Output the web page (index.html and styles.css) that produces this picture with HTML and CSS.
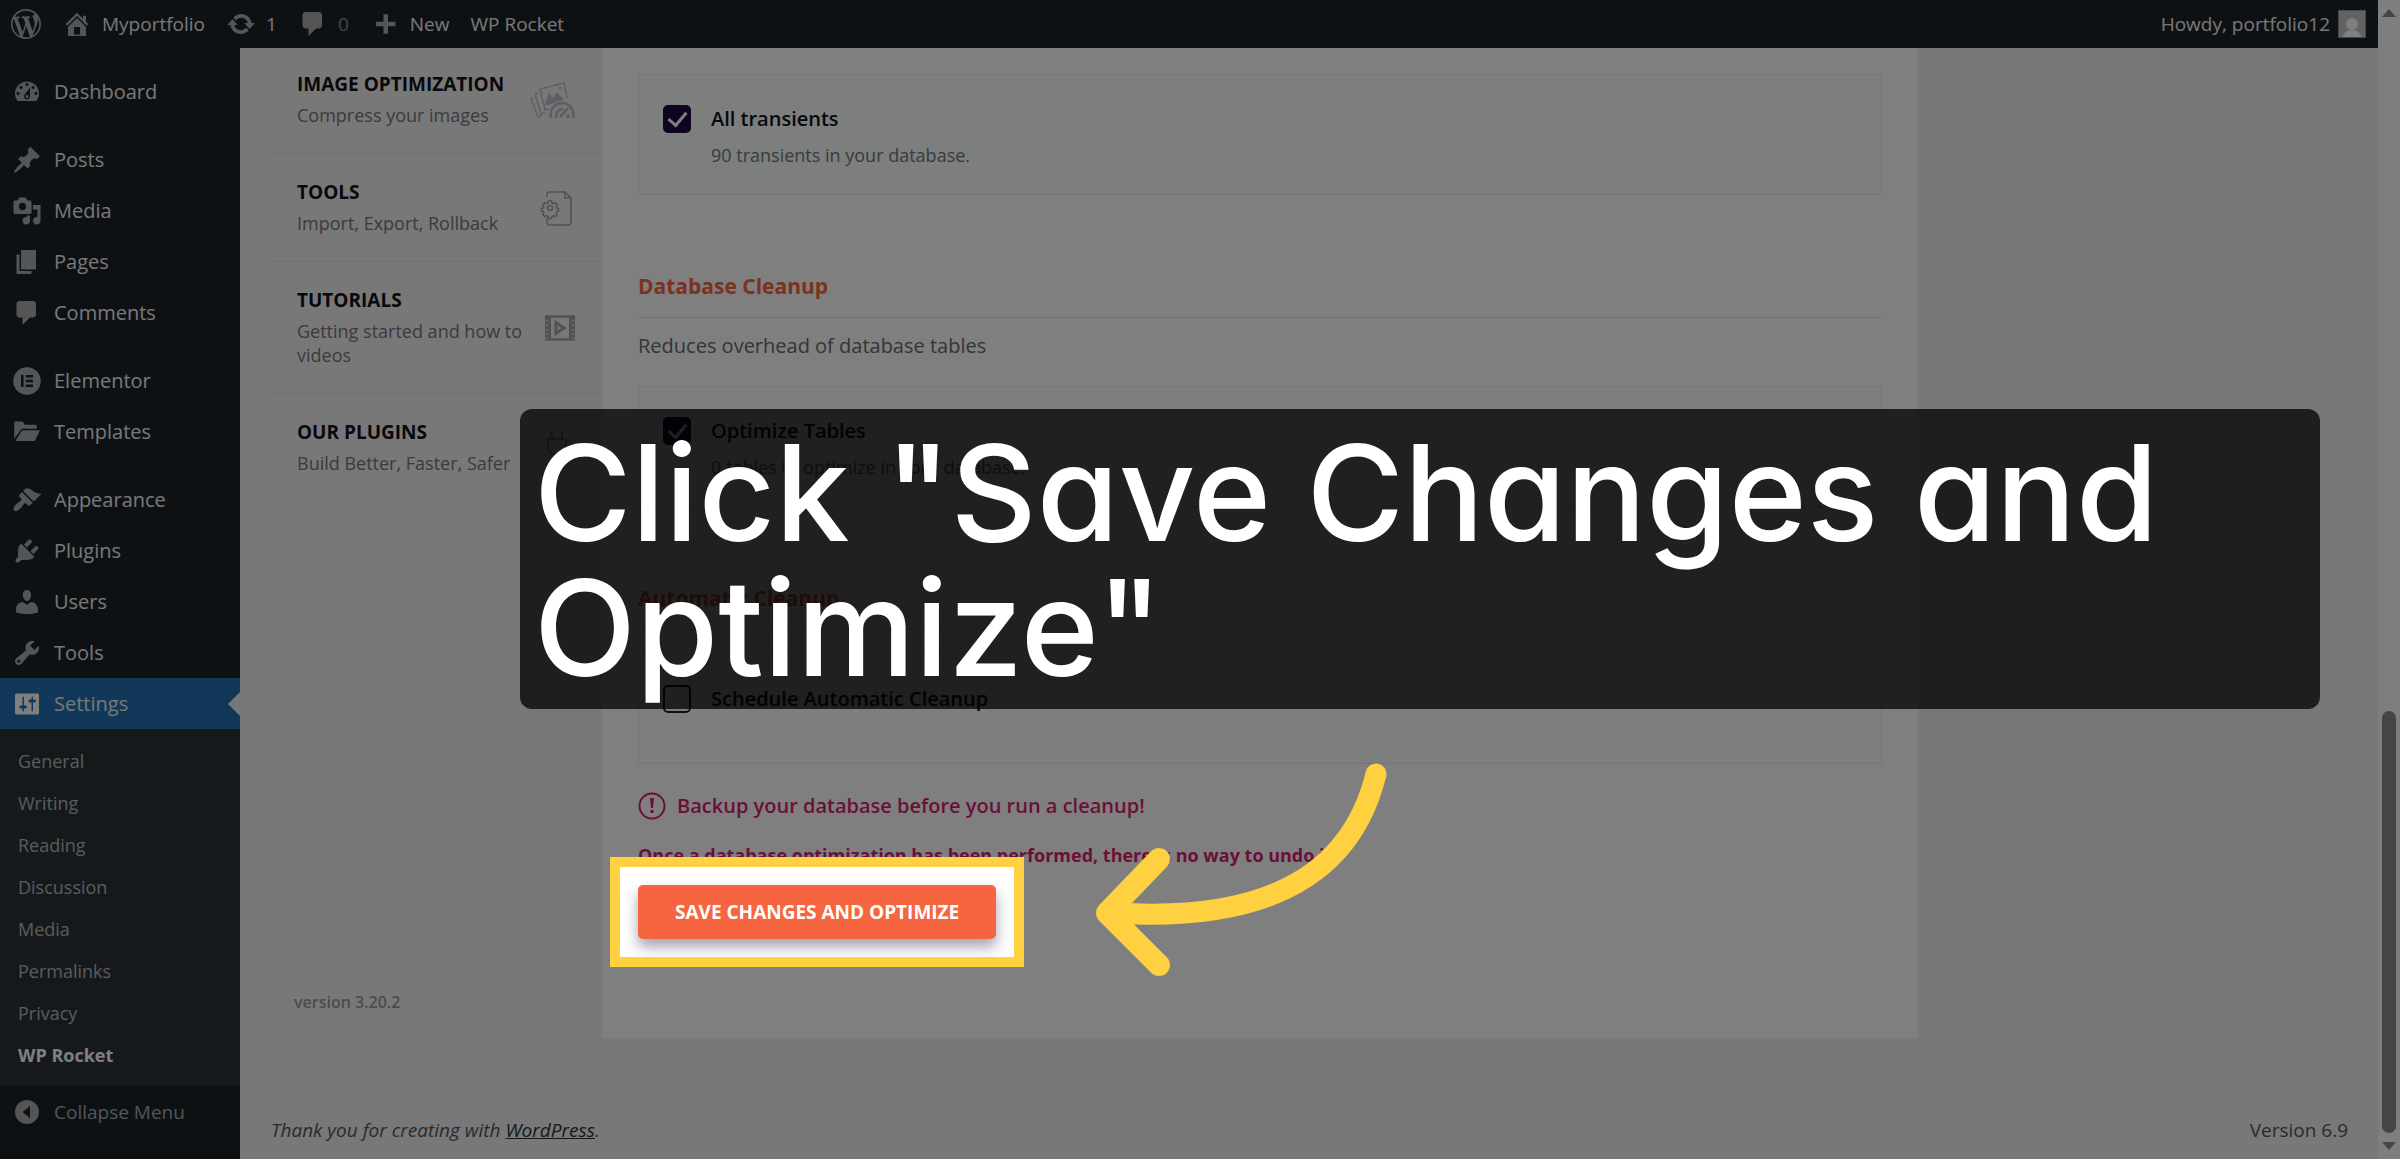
FILE: index.html
```html
<!DOCTYPE html>
<html lang="en">
<head>
<meta charset="utf-8">
<title>WP Rocket settings</title>
<link rel="stylesheet" href="styles.css">
</head>
<body>
<div class="screen">
  <header class="adminbar">
    <a class="bar-item" href="#" aria-label="About WordPress"><svg class="icon icon-wp" viewBox="0 0 20 20"><path d="M20 10c0-5.51-4.49-10-10-10C4.48 0 0 4.49 0 10c0 5.52 4.48 10 10 10 5.51 0 10-4.48 10-10zM7.78 15.37L4.37 6.22c.55-.02 1.17-.08 1.17-.08.5-.06.44-1.13-.06-1.11 0 0-1.45.11-2.37.11-.18 0-.37 0-.58-.01C4.12 2.69 6.87 1.11 10 1.11c2.33 0 4.45.87 6.05 2.34-.68-.11-1.65.39-1.65 1.58 0 .74.45 1.36.9 2.1.35.61.55 1.36.55 2.46 0 1.49-1.4 5-1.4 5l-3.03-8.37c.54-.02.82-.17.82-.17.5-.05.44-1.25-.06-1.22 0 0-1.44.12-2.38.12-.87 0-2.33-.12-2.33-.12-.5-.03-.56 1.2-.06 1.22l.92.08 1.26 3.41zM17.41 10c.24-.64.74-1.87.43-4.25.7 1.29 1.05 2.71 1.05 4.25 0 3.29-1.73 6.24-4.4 7.78.97-2.59 1.94-5.2 2.92-7.78zM6.1 18.09C3.12 16.65 1.11 13.53 1.11 10c0-1.3.23-2.48.72-3.59C3.25 10.3 4.67 14.2 6.1 18.09zm4.03-6.63l2.58 6.98c-.86.29-1.76.45-2.71.45-.79 0-1.57-.11-2.29-.33.81-2.38 1.62-4.74 2.42-7.1z"/></svg></a>
    <a class="bar-item" href="#"><svg class="icon" viewBox="0 0 20 20"><path d="M16 8.5l1.53 1.53-1.06 1.06L10 4.6l-6.47 6.49-1.06-1.06L10 2.5l4 4v-2h2v4zm-6-2.46l6 5.99V18H4v-5.97zM12 17v-5H8v5h4z"/></svg>Myportfolio</a>
    <a class="bar-item" href="#"><svg class="icon" viewBox="0 0 20 20"><path d="M10.2 3.28c3.53 0 6.43 2.61 6.92 6h2.08l-3.5 4-3.5-4h2.32c-.45-1.97-2.21-3.45-4.32-3.45-1.45 0-2.73.71-3.54 1.78L4.95 5.66C6.23 4.2 8.11 3.28 10.2 3.28zm-.4 13.44c-3.52 0-6.43-2.61-6.92-6H.8l3.5-4c1.17 1.33 2.33 2.67 3.5 4H5.48c.45 1.97 2.21 3.45 4.32 3.45 1.45 0 2.73-.71 3.54-1.78l1.71 1.95c-1.28 1.46-3.15 2.38-5.25 2.38z"/></svg>1</a>
    <a class="bar-item bar-muted" href="#"><svg class="icon" viewBox="0 0 20 20"><path d="M5 2h9c1.1 0 2 .9 2 2v7c0 1.1-.9 2-2 2h-2l-5 5v-5H5c-1.1 0-2-.9-2-2V4c0-1.1.9-2 2-2z"/></svg>0</a>
    <a class="bar-item" href="#"><svg class="icon" viewBox="0 0 20 20"><path d="M17 8.5v3h-5v5H9v-5H4v-3h5v-5h3v5h5z"/></svg>New</a>
    <a class="bar-item" href="#">WP Rocket</a>
    <a class="bar-item bar-account" href="#">Howdy, portfolio12<svg class="avatar" viewBox="0 0 28 28"><rect x=".5" y=".5" width="27" height="27" fill="#c4c4c4" stroke="#8c8f94"/><circle cx="14" cy="14" r="6" fill="#fff"/><path d="M4.500 27c2-5.500 5.500-7 9.500-7s7.500 1.500 9.500 7z" fill="#fff"/></svg></a>
  </header>

  <nav class="sidebar" aria-label="Main menu">
    <ul class="menu">
      <li><a href="#"><svg class="icon" viewBox="0 0 20 20"><path d="M3.76 16h12.48c1.1-1.37 1.76-3.11 1.76-5 0-4.42-3.58-8-8-8s-8 3.58-8 8c0 1.89.66 3.63 1.76 5zM10 4c.55 0 1 .45 1 1s-.45 1-1 1-1-.45-1-1 .45-1 1-1zM6 6c.55 0 1 .45 1 1s-.45 1-1 1-1-.45-1-1 .45-1 1-1zm8 0c.55 0 1 .45 1 1s-.45 1-1 1-1-.45-1-1 .45-1 1-1zm-5.370 5.550L12 7v6c0 1.100-.9 2-2 2s-2-.9-2-2c0-.57.24-1.080.63-1.450zM4 10c.55 0 1 .45 1 1s-.45 1-1 1-1-.45-1-1 .45-1 1-1zm12 0c.55 0 1 .45 1 1s-.45 1-1 1-1-.45-1-1 .45-1 1-1zm-5 3c0-.55-.45-1-1-1s-1 .45-1 1 .45 1 1 1 1-.45 1-1z"/></svg>Dashboard</a></li>
      <li class="group"><a href="#"><svg class="icon" viewBox="0 0 20 20"><path d="M10.440 3.020l1.820-1.820 6.360 6.350-1.830 1.820c-1.050-.68-2.480-.57-3.410.36l-.75.75c-.92.93-1.040 2.350-.35 3.410l-1.830 1.820-2.410-2.410-2.800 2.790c-.42.42-3.380 2.710-3.800 2.290s1.860-3.390 2.280-3.810l2.790-2.790L4.100 9.360l1.830-1.820c1.050.69 2.480.57 3.400-.36l.75-.75c.93-.92 1.050-2.350.36-3.410z"/></svg>Posts</a></li>
      <li><a href="#"><svg class="icon" viewBox="0 0 20 20"><path d="M13 11V4c0-.55-.45-1-1-1h-1.670L9 1H5L3.670 3H2c-.55 0-1 .45-1 1v7c0 .55.45 1 1 1h10c.55 0 1-.45 1-1zM7 4.500c1.380 0 2.500 1.120 2.500 2.500S8.380 9.500 7 9.500 4.500 8.380 4.500 7 5.620 4.500 7 4.500zM14 6h5v10.500c0 1.380-1.120 2.500-2.500 2.500S14 17.880 14 16.500s1.120-2.500 2.500-2.500c.17 0 .34.02.5.05V9h-3V6zm-4 8.050V13h2v3.500c0 1.380-1.120 2.500-2.500 2.500S7 17.880 7 16.500 8.120 14 9.500 14c.17 0 .34.02.5.05z"/></svg>Media</a></li>
      <li><a href="#"><svg class="icon" viewBox="0 0 20 20"><path d="M6 15V2h10v13H6zm-1 1h8v2H3V5h2v11z"/></svg>Pages</a></li>
      <li><a href="#"><svg class="icon" viewBox="0 0 20 20"><path d="M5 2h9c1.100 0 2 .9 2 2v7c0 1.100-.9 2-2 2h-2l-5 5v-5H5c-1.100 0-2-.9-2-2V4c0-1.100.9-2 2-2z"/></svg>Comments</a></li>
      <li class="group"><a href="#"><svg class="icon" viewBox="0 0 20 20"><path fill-rule="evenodd" d="M10 .8a9.200 9.200 0 1 0 0 18.400A9.200 9.200 0 0 0 10 .8zM6 6h1.700v8H6zM9.200 6H14v1.600H9.200zM9.200 9.200H14v1.600H9.200zM9.200 12.400H14V14H9.200z"/></svg>Elementor</a></li>
      <li><a href="#"><svg class="icon" viewBox="0 0 20 20"><path d="M2.500 3H7l1.600 2.200h6.900c.6 0 1 .4 1 1v1.600H7.300c-.7 0-1.200.3-1.500.8L1.500 14.700V4c0-.6.400-1 1-1zM7.400 8.800h11.200l-3 6.600c-.2.400-.5.600-1 .6H2.300l4.100-6.600c.2-.4.500-.6 1-.6z"/></svg>Templates</a></li>
      <li class="group"><a href="#"><svg class="icon" viewBox="0 0 20 20"><path d="M14.480 11.060L7.410 3.990l1.500-1.500c.5-.56 2.300-.47 3.510.32 1.210.8 1.430 1.280 2.910 2.100 1.180.64 2.450 1.260 4.450.85zm-.71.71L6.700 4.700 4.930 6.470c-.39.39-.39 1.020 0 1.410l1.060 1.060c.39.39.39 1.030 0 1.420-.6.6-1.430 1.110-2.210 1.690-.35.26-.7.53-1.010.84C1.430 14.230.4 16.080 1.400 17.070c.99 1 2.840-.03 4.180-1.360.31-.31.58-.66.85-1.020.57-.78 1.080-1.610 1.690-2.210.39-.39 1.020-.39 1.410 0l1.060 1.060c.39.39 1.020.39 1.410 0z"/></svg>Appearance</a></li>
      <li><a href="#"><svg class="icon" viewBox="0 0 20 20"><path d="M13.110 4.360L9.870 7.600 8 5.730l3.240-3.240c.35-.34 1.050-.2 1.560.32.52.51.66 1.210.31 1.550zm-8 1.770l.91-1.120 9.010 9.010-1.190.84c-.71.71-2.630 1.160-3.820 1.160H6.140L4.900 17.260c-.59.59-1.540.59-2.120 0-.59-.58-.59-1.530 0-2.120l1.240-1.240v-3.880c0-1.130.4-3.190 1.090-3.890zm7.260 3.970l3.240-3.240c.34-.35 1.040-.21 1.550.31.52.51.66 1.210.31 1.550l-3.240 3.250z"/></svg>Plugins</a></li>
      <li><a href="#"><svg class="icon" viewBox="0 0 20 20"><path d="M10 9.250c-2.270 0-2.730-3.440-2.730-3.440C7 4.020 7.820 2 9.970 2c2.160 0 2.980 2.020 2.710 3.810 0 0-.41 3.440-2.680 3.440zm0 2.570L12.720 10c2.390 0 4.520 2.330 4.520 4.530v2.490s-3.650 1.130-7.240 1.130c-3.650 0-7.240-1.130-7.240-1.130v-2.490c0-2.250 1.940-4.480 4.470-4.480z"/></svg>Users</a></li>
      <li><a href="#"><svg class="icon" viewBox="0 0 20 20"><path d="M16.680 9.770c-1.340 1.340-3.300 1.670-4.950.99l-5.410 6.520c-.99.99-2.590.99-3.580 0s-.99-2.590 0-3.570l6.520-5.420c-.68-1.650-.35-3.610.99-4.950 1.280-1.280 3.120-1.620 4.720-1.060l-2.890 2.890 2.820 2.820 2.860-2.870c.53 1.580.18 3.390-1.080 4.650zM3.810 16.210c.4.39 1.040.39 1.430 0 .4-.4.4-1.040 0-1.430-.39-.4-1.030-.4-1.430 0-.39.39-.39 1.030 0 1.430z"/></svg>Tools</a></li>
      <li class="current"><a href="#"><svg class="icon" viewBox="0 0 20 20"><path d="M18 16V4c0-.55-.45-1-1-1H3c-.55 0-1 .45-1 1v12c0 .55.45 1 1 1h14c.55 0 1-.45 1-1zM8 11h1c.55 0 1 .45 1 1s-.45 1-1 1H8v1.500c0 .28-.22.5-.5.5s-.5-.22-.5-.5V13H6c-.55 0-1-.45-1-1s.45-1 1-1h1V5.500c0-.28.22-.5.5-.5s.5.22.5.5V11zm5-2h-1c-.55 0-1-.45-1-1s.45-1 1-1h1V5.500c0-.28.22-.5.5-.5s.5.22.5.5V7h1c.55 0 1 .45 1 1s-.45 1-1 1h-1v5.500c0 .28-.22.5-.5.5s-.5-.22-.5-.5V9z"/></svg>Settings</a>
        <ul class="submenu">
          <li><a href="#">General</a></li>
          <li><a href="#">Writing</a></li>
          <li><a href="#">Reading</a></li>
          <li><a href="#">Discussion</a></li>
          <li><a href="#">Media</a></li>
          <li><a href="#">Permalinks</a></li>
          <li><a href="#">Privacy</a></li>
          <li><a class="active" href="#">WP Rocket</a></li>
        </ul>
      </li>
    </ul>
    <button class="collapse" type="button"><svg class="icon" viewBox="0 0 20 20"><path fill-rule="evenodd" d="M10 2a8 8 0 1 0 0 16 8 8 0 0 0 0-16zm2 4v8l-5-4z"/></svg>Collapse Menu</button>
  </nav>

  <main class="main">
    <div class="plugin">
      <nav class="tabs" aria-label="WP Rocket sections">
        <a class="tab" href="#"><span class="tab-text"><strong>IMAGE OPTIMIZATION</strong><span>Compress your images</span></span>
          <svg class="tab-icon tab-icon-pale" viewBox="0 0 46 40" fill="none" stroke="currentColor" stroke-width="1.500"><path d="M19 29l-4 1-5-21 24-6 3 15"/><path d="M8 13l-3 1 6 20 4-1M3 18l-2 1 7 18 4-2"/><path d="M15 23l4-10 4 5 4-6 7 8-6 1-6 3-8 2z" fill="currentColor" stroke="none"/><circle cx="30" cy="8" r="1.500" fill="currentColor" stroke="none"/><path stroke-width="3" d="M21 38c-2-9 4-15 11-15s13 6 11 15"/><path stroke-width="3" d="M27 38c-2-5 1-9 6-9M38 34v4M30 37l8-9"/></svg></a>
        <a class="tab" href="#"><span class="tab-text"><strong>TOOLS</strong><span>Import, Export, Rollback</span></span>
          <svg class="tab-icon" viewBox="0 0 46 40" fill="none" stroke="currentColor" stroke-width="1.500"><path d="M17 9V6q0-2 2-2h16l6 6v24q0 3-3 3H20q-3 0-3-3v-4M35 4v6h6"/><circle cx="20" cy="20" r="2.500"/><path d="M18.500 13h3l.5 2 1.500.8 1.800-1 2 2-1 1.700.4 1.500 2 .5v2.500l-2 .5-.5 1.500 1 1.700-2 2-1.700-1-1.500.8-.5 2h-3l-.5-2-1.500-.8-1.700 1-2-2 1-1.700-.5-1.500-2-.5v-2.500l2-.5.5-1.500-1-1.700 2-2 1.700 1 1.500-.8z"/></svg></a>
        <a class="tab" href="#"><span class="tab-text"><strong>TUTORIALS</strong><span>Getting started and how to videos</span></span>
          <svg class="tab-icon" viewBox="0 0 46 40" fill="none" stroke="currentColor"><path d="M15 8.500h30M15 31.500h30" stroke-width="2.500"/><path d="M18 8v24M42 8v24" stroke-width="6"/><path d="M17 12v19M43 12v19" stroke="#e4e4e6" stroke-width="2" stroke-dasharray="1.500 3"/><path d="M26 14.500l8 5.500-8 5.500z" stroke-width="3"/></svg></a>
        <a class="tab" href="#"><span class="tab-text"><strong>OUR PLUGINS</strong><span>Build Better, Faster, Safer</span></span>
          <svg class="tab-icon" viewBox="0 0 46 40" fill="none" stroke="currentColor" stroke-width="2"><path d="M18 11h18v7c0 6-4 9-9 9s-9-3-9-9zM22 11V2M32 11V2M27 27v10"/></svg></a>
        <p class="version">version 3.20.2</p>
      </nav>

      <form class="content">
        <section>
          <div class="option">
            <input type="checkbox" id="transients" checked>
            <label for="transients">All transients</label>
            <p>90 transients in your database.</p>
          </div>
        </section>
        <section>
          <h2>Database Cleanup</h2>
          <p class="lead">Reduces overhead of database tables</p>
          <div class="option">
            <input type="checkbox" id="tables" checked>
            <label for="tables">Optimize Tables</label>
            <p>0 tables to optimize in your database.</p>
          </div>
        </section>
        <section>
          <h2>Automatic Cleanup</h2>
          <div class="option option-short">
            <input type="checkbox" id="schedule">
            <label for="schedule">Schedule Automatic Cleanup</label>
          </div>
        </section>
        <p class="warning"><svg class="alert" viewBox="0 0 28 28"><circle cx="14" cy="14" r="12.500" fill="none" stroke="currentColor" stroke-width="2"/><path d="M12 6h4l-1 10h-2zM12.500 18h3v3h-3z" fill="currentColor"/></svg>Backup your database before you run a cleanup!</p>
        <p class="warning warning-note">Once a database optimization has been performed, there is no way to undo it.</p>
        <div class="save">
          <button class="save-button" type="submit">SAVE CHANGES AND OPTIMIZE</button>
          <span class="spotlight"></span>
        </div>
      </form>
    </div>

    <footer class="footer">
      <em>Thank you for creating with <a href="#">WordPress</a>.</em>
      <span>Version 6.9</span>
    </footer>
  </main>

  <div class="scrollbar" aria-hidden="true">
    <svg class="scroll-arrow" viewBox="0 0 14 8"><path d="M7 0l7 8H0z"/></svg>
    <span class="thumb"></span>
    <svg class="scroll-arrow" viewBox="0 0 14 8"><path d="M0 0h14L7 8z"/></svg>
  </div>
</div>

<p class="callout">Click "Save Changes and Optimize"</p>
<svg class="arrow" viewBox="0 0 300 224" fill="none" stroke="#ffd140" stroke-linecap="round" stroke-linejoin="round"><path stroke-width="21" d="M281 21C255 127 165 169 20 160"/><path stroke-width="22" d="M64 106L12 160l52 52"/></svg>
</body>
</html>
```

FILE: styles.css
```css
* {
  box-sizing: border-box;
}

body {
  position: relative;
  min-height: 100vh;
  margin: 0;
  overflow: hidden;
  background: #f0f0f1;
  color: #3c434a;
  font: 19px/24px "Open Sans", "Noto Sans", sans-serif;
}

a {
  color: inherit;
  text-decoration: none;
}

p,
h2,
ul {
  margin: 0;
  padding: 0;
}

ul {
  list-style: none;
}

button {
  border: 0;
  font-family: inherit;
}

.screen {
  display: grid;
  grid-template-columns: 240px 1fr 22px;
  grid-template-rows: 48px 1fr;
  min-height: 100vh;
}

.icon {
  flex: none;
  width: 30px;
  height: 30px;
  fill: #a7aaad;
}

/* Top bar */
.adminbar {
  grid-column: 1 / 3;
  display: flex;
  align-items: center;
  gap: 21px;
  padding: 0 12px 0 11px;
  background: #1d2327;
  color: #f0f0f1;
}

.bar-item {
  display: flex;
  align-items: center;
  gap: 10px;
}

.bar-muted {
  color: #8a8d90;
}

.bar-account {
  gap: 8px;
  margin-left: auto;
}

.avatar {
  width: 28px;
  height: 28px;
}

/* Left menu */
.sidebar {
  padding-top: 18px;
  background: #1d2327;
  color: #f0f0f1;
  font-size: 20px;
}

.menu > li > a,
.collapse {
  display: flex;
  align-items: center;
  gap: 12px;
  height: 51px;
  padding-left: 12px;
}

.menu > .group {
  margin-top: 17px;
}

.menu > .current > a {
  position: relative;
  background: #2271b1;
}

.current > a .icon {
  fill: #fff;
}

.current > a::after {
  content: "";
  position: absolute;
  top: 50%;
  right: 0;
  margin-top: -12px;
  border: 12px solid transparent;
  border-left: 0;
  border-right-color: #f0f0f1;
}

.submenu {
  padding: 11px 18px 10px;
  background: #2c3338;
  color: #b4b7ba;
  font-size: 18px;
  line-height: 42px;
}

.submenu .active {
  color: #fff;
  font-weight: 700;
}

.collapse {
  width: 100%;
  background: none;
  color: #a7aaad;
  font-size: 19px;
}

/* Main area */
.main {
  display: flex;
  flex-direction: column;
  padding: 0 30px 0 26px;
}

.plugin {
  display: grid;
  grid-template-columns: 336px 1fr;
  max-width: 1652px;
}

.tabs {
  display: flex;
  flex-direction: column;
}

.tab {
  display: flex;
  align-items: center;
  padding: 26px 26px 26px 31px;
  border-bottom: 1px solid #e2e2e6;
  color: #72777c;
  font-size: 18px;
}

.tab:first-child {
  padding-top: 24px;
}

.tab:nth-child(4) {
  border-bottom: 0;
}

.tab-text {
  display: grid;
  flex: 1;
  gap: 7px;
}

.tab-text strong {
  color: #121116;
  font-size: 19px;
  font-weight: 700;
}

.tab-icon {
  flex: none;
  width: 46px;
  height: 40px;
  margin-left: -10px;
  color: #a2a4a9;
}

.tab-icon-pale {
  color: #bcc0c6;
}

.version {
  margin-top: auto;
  padding: 0 28px 24px;
  color: #96989b;
  font-size: 16px;
  font-weight: 600;
}

.content {
  padding: 26px 36px 99px;
  background: #fff;
}

.content section + section {
  margin-top: 76px;
}

.content h2 {
  padding-bottom: 16px;
  border-bottom: 1px solid #d8dde0;
  color: #f56640;
  font-size: 21px;
  font-weight: 700;
  line-height: 30px;
}

.lead {
  margin-top: 14px;
  color: #666a70;
  font-size: 20px;
  line-height: 28px;
}

.option {
  display: grid;
  grid-template-columns: 28px 1fr;
  gap: 8px 20px;
  padding: 30px 24px 25px;
  border: 1px solid #e5ecea;
  border-radius: 3px;
  background: #f9fefc;
  line-height: 28px;
}

h2 + .option {
  margin-top: 24px;
}

.lead + .option {
  margin-top: 26px;
}

.option-short {
  padding-bottom: 50px;
}

.option label {
  color: #121116;
  font-size: 20px;
  font-weight: 600;
}

.option p {
  grid-column: 2;
  color: #72777c;
  font-size: 18px;
}

.option input {
  appearance: none;
  display: grid;
  place-items: center;
  width: 28px;
  height: 28px;
  margin: 0;
  border: 2px solid #1f1d2b;
  border-radius: 5px;
}

.option input:checked {
  border-color: #1e0a44;
  background: #1e0a44;
}

.option input:checked::after {
  content: "";
  width: 8px;
  height: 15px;
  margin-top: -4px;
  border: solid #fff;
  border-width: 0 3px 3px 0;
  transform: rotate(40deg);
}

.warning {
  display: flex;
  align-items: center;
  gap: 11px;
  margin-top: 28px;
  color: #d61f70;
  font-size: 20px;
  font-weight: 600;
  line-height: 28px;
}

.warning-note {
  margin-top: 21px;
  font-size: 18px;
  font-weight: 700;
}

.alert {
  width: 28px;
  height: 28px;
}

.save {
  position: relative;
  width: fit-content;
  margin-top: 16px;
}

.save-button {
  height: 54px;
  padding: 0 37px;
  border-radius: 5px;
  background: #f56640;
  box-shadow: 0 8px 14px rgba(30, 20, 70, 0.4);
  color: #fff;
  font-size: 19px;
  font-weight: 700;
}

/* Everything outside this frame is dimmed by its spread shadow */
.spotlight {
  position: absolute;
  inset: -28px;
  z-index: 1;
  border: 10px solid #ffd140;
  box-shadow: 0 0 0 3000px rgba(0, 0, 0, 0.5);
  pointer-events: none;
}

.footer {
  display: flex;
  justify-content: space-between;
  margin-top: auto;
  padding: 0 0 17px 5px;
  color: #50575e;
}

.footer a {
  color: #2c3338;
  text-decoration: underline;
}

.scrollbar {
  grid-column: 3;
  grid-row: 1 / 3;
  display: flex;
  flex-direction: column;
  align-items: center;
  padding: 9px 0;
  background: #fdfdfd;
}

.scroll-arrow {
  width: 14px;
  height: 8px;
  fill: #8a8a8a;
}

.thumb {
  width: 14px;
  height: 37%;
  margin: auto 0 9px;
  border-radius: 7px;
  background: #8a8a8a;
}

/* Tutorial annotations */
.callout {
  position: absolute;
  top: 409px;
  right: 80px;
  left: 520px;
  z-index: 2;
  padding: 16px 14px 14px;
  border-radius: 12px;
  background: rgba(0, 0, 0, 0.75);
  color: #fff;
  font: 500 133px/135px Inter, "Open Sans", sans-serif;
  font-feature-settings: "cv11";
}

.arrow {
  position: absolute;
  top: 753px;
  left: 1095px;
  z-index: 2;
  width: 300px;
}
```
